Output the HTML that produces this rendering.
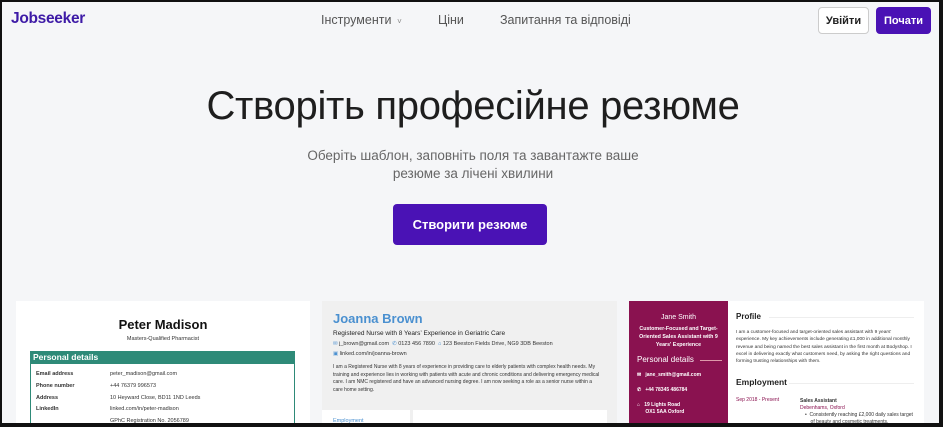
<!DOCTYPE html>
<html><head><meta charset="utf-8"><style>
*{margin:0;padding:0;box-sizing:border-box}
body{width:946px;height:427px;overflow:hidden;background:#f5f6f8;font-family:"Liberation Sans",sans-serif;position:relative;color:#222}
.a{position:absolute}
.nav{font-size:12.5px;color:#555;top:13px}
.btn{border-radius:4px;font-size:11px;font-weight:bold;display:flex;align-items:center;justify-content:center}
.t{font-size:5.5px;color:#333;white-space:nowrap}
</style></head><body>

<div class="a" style="left:11px;top:10px;font-size:15.5px;font-weight:bold;color:#3d1aa6;letter-spacing:-0.3px">Jobseeker</div>
<div class="a nav" style="left:321px">Інструменти <span style="font-size:8px;color:#888">&nbsp;˅</span></div>
<div class="a nav" style="left:438px">Ціни</div>
<div class="a nav" style="left:500px">Запитання та відповіді</div>
<div class="a btn" style="left:818px;top:7px;width:51px;height:27px;border:1px solid #ccc;background:#fff;color:#222">Увійти</div>
<div class="a btn" style="left:876px;top:7px;width:55px;height:27px;background:#4a12b5;color:#fff">Почати</div>

<div class="a" style="left:0;width:946px;top:84px;text-align:center;font-size:40px;color:#1e1e1e;letter-spacing:-0.3px">Створіть професійне резюме</div>
<div class="a" style="left:0;width:946px;top:147px;text-align:center;font-size:13.5px;color:#666;line-height:18px">Оберіть шаблон, заповніть поля та завантажте ваше<br>резюме за лічені хвилини</div>
<div class="a btn" style="left:393px;top:204px;width:154px;height:41px;background:#4a12b5;color:#fff;font-size:13px;font-weight:bold">Створити резюме</div>

<!-- card1 -->
<div class="a" style="left:16px;top:301px;width:294px;height:123px;background:#fff;overflow:hidden">
  <div class="a" style="left:0;width:294px;top:16px;text-align:center;font-size:13px;font-weight:bold;color:#111">Peter Madison</div>
  <div class="a t" style="left:0;width:294px;top:35px;text-align:center">Masters-Qualified Pharmacist</div>
  <div class="a" style="left:14px;top:50px;width:265px;height:80px;border:1px solid #2e8a78"></div>
  <div class="a" style="left:14px;top:50px;width:265px;height:13px;background:#2e8a78;color:#fff;font-size:8.5px;font-weight:bold;padding:1px 3px">Personal details</div>
  <div class="a t" style="left:20px;top:70px;font-weight:bold">Email address</div><div class="a t" style="left:94px;top:70px">peter_madison@gmail.com</div>
  <div class="a t" style="left:20px;top:82px;font-weight:bold">Phone number</div><div class="a t" style="left:94px;top:82px">+44 76379 996573</div>
  <div class="a t" style="left:20px;top:94px;font-weight:bold">Address</div><div class="a t" style="left:94px;top:94px">10 Heyward Close, BD11 1ND Leeds</div>
  <div class="a t" style="left:20px;top:105px;font-weight:bold">LinkedIn</div><div class="a t" style="left:94px;top:105px">linked.com/in/peter-madison</div>
  <div class="a t" style="left:94px;top:117px">GPhC Registration No. 2056789</div>
</div>

<!-- card2 -->
<div class="a" style="left:322px;top:301px;width:295px;height:123px;background:#f0f0f0;overflow:hidden">
  <div class="a" style="left:11px;top:10px;font-size:13px;font-weight:bold;color:#4a90d0">Joanna Brown</div>
  <div class="a" style="left:11px;top:29px;font-size:6.5px;color:#222">Registered Nurse with 8 Years’ Experience in Geriatric Care</div>
  <div class="a t" style="left:11px;top:40px"><span style="color:#4a90d0">✉</span> j_brown@gmail.com &nbsp;<span style="color:#4a90d0">✆</span> 0123 456 7890 &nbsp;<span style="color:#4a90d0">⌂</span> 123 Beeston Fields Drive, NG9 3DB Beeston</div>
  <div class="a t" style="left:11px;top:50px"><span style="color:#4a90d0">▣</span> linked.com/in/joanna-brown</div>
  <div class="a" style="left:11px;top:63px;width:270px;font-size:5px;line-height:7.5px;color:#333">I am a Registered Nurse with 8 years of experience in providing care to elderly patients with complex health needs. My training and experience lies in working with patients with acute and chronic conditions and delivering emergency medical care. I am NMC registered and have an advanced nursing degree. I am now seeking a role as a senior nurse within a care home setting.</div>
  <div class="a" style="left:0;top:109px;width:88px;height:14px;background:#fff"></div>
  <div class="a" style="left:91px;top:109px;width:194px;height:14px;background:#fff"></div>
  <div class="a t" style="left:11px;top:117px;color:#4a90d0">Employment</div>
</div>

<!-- card3 -->
<div class="a" style="left:629px;top:301px;width:295px;height:123px;background:#fff;overflow:hidden">
  <div class="a" style="left:0;top:0;width:99px;height:123px;background:#8a1250;color:#fff">
    <div class="a" style="left:0;width:99px;top:13px;text-align:center;font-size:7px">Jane Smith</div>
    <div class="a" style="left:4px;width:91px;top:24px;text-align:center;font-size:5.3px;font-weight:bold;line-height:8px">Customer-Focused and Target-Oriented Sales Assistant with 9 Years' Experience</div>
    <div class="a" style="left:8px;top:54px;font-size:8px">Personal details</div>
    <div class="a" style="left:71px;top:59px;width:22px;height:1px;background:#d9a"></div>
    <div class="a" style="left:8px;top:71px;font-size:5px;font-weight:bold">✉&nbsp;&nbsp; jane_smith@gmail.com</div>
    <div class="a" style="left:8px;top:86px;font-size:5px;font-weight:bold">✆&nbsp;&nbsp; +44 78345 486784</div>
    <div class="a" style="left:8px;top:101px;font-size:5px;font-weight:bold;line-height:7px">⌂&nbsp;&nbsp; 19 Lights Road<br>&nbsp;&nbsp;&nbsp;&nbsp;&nbsp;&nbsp;OX1 5AA Oxford</div>
  </div>
  <div class="a" style="left:107px;top:11px;font-size:8px;font-weight:bold;color:#222">Profile</div>
  <div class="a" style="left:140px;top:16px;width:145px;height:1px;background:#eee"></div>
  <div class="a" style="left:107px;top:28px;width:180px;font-size:4.8px;line-height:7.3px;color:#333">I am a customer-focused and target-oriented sales assistant with 9 years' experience. My key achievements include generating £1,000 in additional monthly revenue and being named the best sales assistant in the first month at Bodyshop. I excel in delivering exactly what customers need, by asking the right questions and forming trusting relationships with them.</div>
  <div class="a" style="left:107px;top:76px;font-size:8.5px;font-weight:bold;color:#222">Employment</div>
  <div class="a" style="left:160px;top:82px;width:125px;height:1px;background:#eee"></div>
  <div class="a t" style="left:107px;top:96px;color:#8a1250;font-size:5px">Sep 2018 - Present</div>
  <div class="a t" style="left:171px;top:97px;font-weight:bold;font-size:5px">Sales Assistant</div>
  <div class="a t" style="left:171px;top:104px;color:#8a1250;font-size:5px">Debenhams, Oxford</div>
  <div class="a t" style="left:176px;top:111px;font-size:5px;line-height:7px">•&nbsp; Consistently reaching £2,000 daily sales target<br>&nbsp;&nbsp;&nbsp; of beauty and cosmetic treatments.</div>
</div>

<div class="a" style="left:0;top:0;width:946px;height:2px;background:#111"></div>
<div class="a" style="left:0;top:0;width:2px;height:427px;background:#111"></div>
<div class="a" style="left:939px;top:0;width:4px;height:427px;background:#111"></div>
<div class="a" style="left:0;top:423px;width:946px;height:4px;background:#111"></div>
<div class="a" style="left:943px;top:0;width:3px;height:427px;background:#fff"></div>
</body></html>
